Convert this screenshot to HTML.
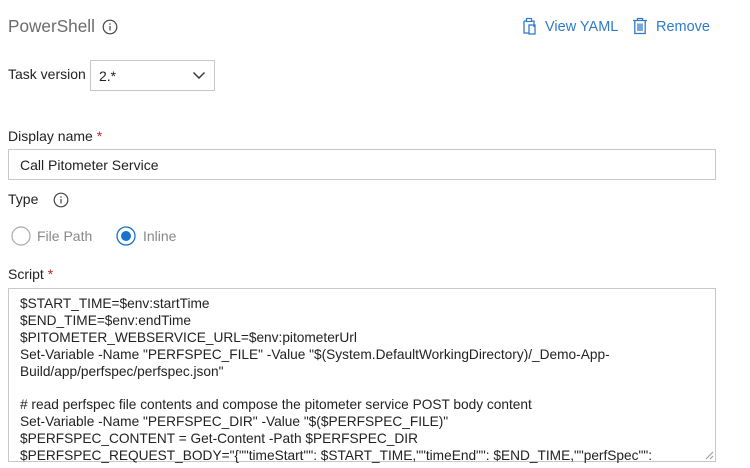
<!DOCTYPE html>
<html><head><style>
*{margin:0;padding:0;box-sizing:border-box}
body{width:750px;height:468px;background:#fff;font-family:"Liberation Sans",Arial,sans-serif;color:#222;position:relative;overflow:hidden}
.a{position:absolute;white-space:nowrap}
.lbl{font-size:14px;color:#222}
.req{color:#c4262e}
.box{position:absolute;border:1px solid #c8c8c8;background:#fff}
.blue{color:#2f7bc9;font-size:14.5px}
.code{position:absolute;left:20px;top:296px;font-size:13.7px;line-height:16.9px;color:#222;white-space:pre}
</style></head><body>
<div class="a" style="left:8px;top:16px;font-size:17.2px;color:#6b6b6b">PowerShell</div>
<svg class="a" style="left:102px;top:19px" width="16" height="16" viewBox="0 0 16 16"><circle cx="8" cy="8" r="6.8" fill="none" stroke="#444" stroke-width="1.2"/><rect x="7.4" y="7" width="1.2" height="4.5" fill="#444"/><circle cx="8" cy="5" r="0.8" fill="#444"/></svg>

<svg class="a" style="left:521px;top:17px" width="17" height="18" viewBox="0 0 17 18"><path d="M3 4h3M10 4h3V10M3 4v12h5" fill="none" stroke="#2f7bc9" stroke-width="1.3"/><rect x="5.5" y="1.5" width="5" height="3" fill="none" stroke="#2f7bc9" stroke-width="1.2"/><rect x="8" y="8" width="6" height="9" fill="none" stroke="#2f7bc9" stroke-width="1.3"/></svg>
<div class="a blue" style="left:545px;top:19px">View YAML</div>
<svg class="a" style="left:632px;top:17px" width="16" height="18" viewBox="0 0 16 18"><path d="M1 3.5h14M5.5 3.5V1.5h5v2M2.8 3.5v13h10.4v-13M6 6.5v7.5M8 6.5v7.5M10 6.5v7.5" fill="none" stroke="#2f7bc9" stroke-width="1.3"/></svg>
<div class="a blue" style="left:656px;top:19px">Remove</div>

<div class="a lbl" style="left:8px;top:66px">Task version</div>
<div class="box" style="left:90px;top:60px;width:125px;height:31px"></div>
<div class="a lbl" style="left:99px;top:68px">2.*</div>
<svg class="a" style="left:192px;top:70px" width="14" height="10" viewBox="0 0 14 10"><path d="M1.5 2.5l5.5 5.5 5.5-5.5" fill="none" stroke="#333" stroke-width="1.4"/></svg>

<div class="a lbl" style="left:8px;top:128px">Display name <span class="req">*</span></div>
<div class="box" style="left:8px;top:149px;width:708px;height:31px"></div>
<div class="a lbl" style="left:20px;top:157px">Call Pitometer Service</div>

<div class="a lbl" style="left:8px;top:191px">Type</div>
<svg class="a" style="left:53px;top:192px" width="16" height="16" viewBox="0 0 16 16"><circle cx="8" cy="8" r="6.8" fill="none" stroke="#444" stroke-width="1.2"/><rect x="7.4" y="7" width="1.2" height="4.5" fill="#444"/><circle cx="8" cy="5" r="0.8" fill="#444"/></svg>

<svg class="a" style="left:11px;top:226px" width="20" height="20"><circle cx="10" cy="10" r="9" fill="#fff" stroke="#aaa" stroke-width="1.2"/></svg>
<div class="a" style="left:37px;top:228px;font-size:14px;color:#888">File Path</div>
<svg class="a" style="left:116px;top:226px" width="20" height="20"><circle cx="10" cy="10" r="9" fill="#fff" stroke="#1a73c9" stroke-width="1.3"/><circle cx="10" cy="10" r="5" fill="#1a73c9"/></svg>
<div class="a" style="left:143px;top:228px;font-size:14px;color:#888">Inline</div>

<div class="a lbl" style="left:8px;top:266px">Script <span class="req">*</span></div>
<div class="box" style="left:8px;top:288px;width:708px;height:174px"></div>
<svg class="a" style="left:704px;top:450px" width="10" height="10"><path d="M9 2L2 9M9 6L6 9" stroke="#999" stroke-width="1"/></svg>
<div class="code">$START_TIME=$env:startTime
$END_TIME=$env:endTime
$PITOMETER_WEBSERVICE_URL=$env:pitometerUrl
Set-Variable -Name "PERFSPEC_FILE" -Value "$(System.DefaultWorkingDirectory)/_Demo-App-
Build/app/perfspec/perfspec.json"

# read perfspec file contents and compose the pitometer service POST body content
Set-Variable -Name "PERFSPEC_DIR" -Value "$($PERFSPEC_FILE)"
$PERFSPEC_CONTENT = Get-Content -Path $PERFSPEC_DIR
$PERFSPEC_REQUEST_BODY="{""timeStart"": $START_TIME,""timeEnd"": $END_TIME,""perfSpec"":</div>
</body></html>
